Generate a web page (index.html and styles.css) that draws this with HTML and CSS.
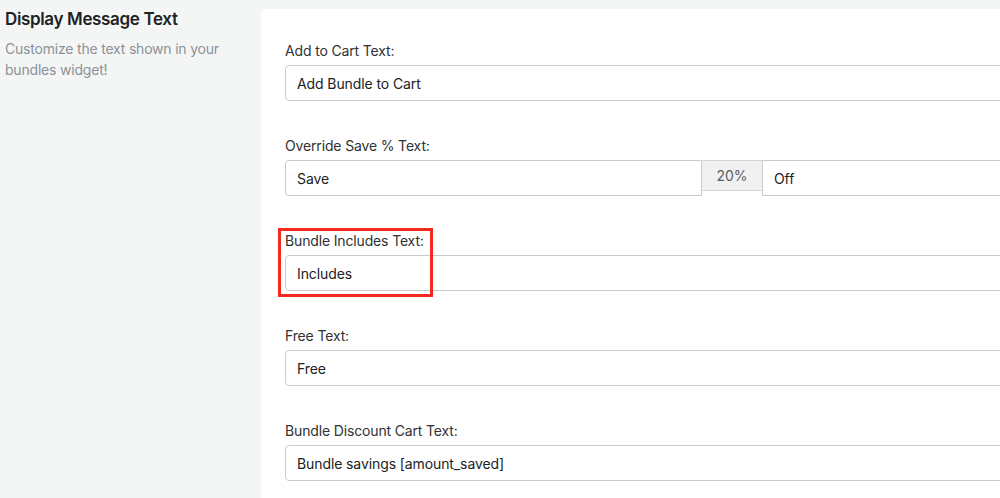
FILE: index.html
```html
<!DOCTYPE html>
<html lang="en">
<head>
<meta charset="utf-8">
<title>Display Message Text</title>
<link rel="stylesheet" href="styles.css">
</head>
<body>
<div class="layout">
  <aside class="aside">
    <h2 class="aside-title">Display Message Text</h2>
    <p class="aside-text">Customize the text shown in your bundles widget!</p>
  </aside>
  <section class="card">
    <div class="field">
      <label class="label">Add to Cart Text:</label>
      <div class="input">Add Bundle to Cart</div>
    </div>
    <div class="field">
      <label class="label">Override Save % Text:</label>
      <div class="group">
        <div class="input input-left">Save</div>
        <div class="addon">20%</div>
        <div class="input input-right">Off</div>
      </div>
    </div>
    <div class="field field-marked">
      <div class="highlight"></div>
      <label class="label">Bundle Includes Text:</label>
      <div class="input">Includes</div>
    </div>
    <div class="field">
      <label class="label">Free Text:</label>
      <div class="input">Free</div>
    </div>
    <div class="field">
      <label class="label">Bundle Discount Cart Text:</label>
      <div class="input">Bundle savings [amount_saved]</div>
    </div>
  </section>
</div>
</body>
</html>
```

FILE: styles.css
```css
html, body {
  margin: 0;
  padding: 0;
}
body {
  background: #f4f6f6;
  font-family: Inter, "Noto Sans", sans-serif;
  overflow: hidden;
  width: 1000px;
  height: 498px;
}
.layout {
  display: flex;
  padding-left: 5px;
  width: 1200px;
}
.aside {
  width: 256px;
  flex: none;
  padding-top: 8px;
}
.aside-title {
  margin: 0;
  font-size: 17px;
  line-height: 22px;
  font-weight: 600;
  color: #202223;
  letter-spacing: -0.35px;
}
.aside-text {
  margin: 8px 0 0;
  font-size: 14px;
  line-height: 21px;
  color: #8c9196;
  width: 230px;
  letter-spacing: -0.2px;
}
.card {
  flex: none;
  width: 820px;
  margin-top: 9px;
  background: #ffffff;
  border-radius: 5px;
  padding: 32px 24px 0;
  height: 600px;
}
.field {
  margin-bottom: 35px;
}
.field-marked {
  position: relative;
}
.highlight {
  position: absolute;
  left: -7px;
  top: -3px;
  width: 155px;
  height: 69px;
  border: 3px solid #f52a1f;
  box-sizing: border-box;
}
.label {
  display: block;
  font-size: 14px;
  line-height: 20px;
  color: #303234;
  margin-bottom: 4px;
  letter-spacing: -0.15px;
}
.input {
  height: 36px;
  box-sizing: border-box;
  border: 1px solid #c9cccf;
  border-radius: 4px;
  padding: 0 11px;
  display: flex;
  align-items: center;
  font-size: 14px;
  color: #202223;
  background: #fff;
  letter-spacing: -0.1px;
}
.group {
  display: flex;
  align-items: flex-start;
}
.input-left {
  width: 417px;
  border-radius: 4px 0 0 4px;
  flex: none;
}
.addon {
  width: 61px;
  height: 31px;
  box-sizing: border-box;
  flex: none;
  background: #f1f1f1;
  border: 1px solid #d2d4d6;
  border-left: none;
  display: flex;
  align-items: center;
  justify-content: center;
  font-size: 14px;
  color: #5c5f62;
}
.input-right {
  flex: 1;
  border-left: 1px solid #c9cccf;
  border-radius: 0 4px 4px 0;
  margin-left: -1px;
}
```
